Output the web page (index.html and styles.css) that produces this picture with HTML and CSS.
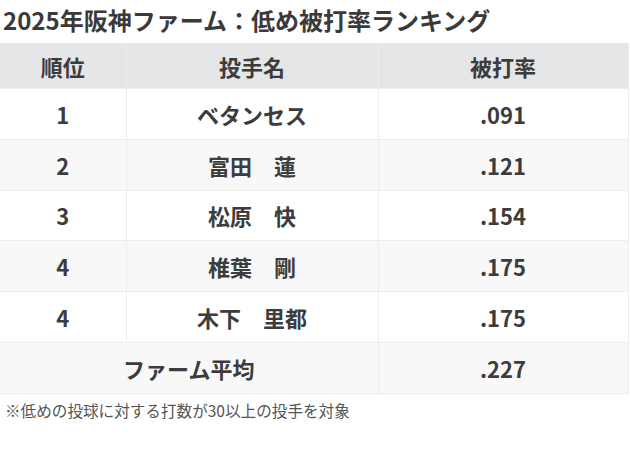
FILE: index.html
```html
<!DOCTYPE html>
<html lang="ja">
<head>
<meta charset="utf-8">
<link rel="stylesheet" href="styles.css">
</head>
<body>
<div class="wrap">
  <h1 class="title">2025年阪神ファーム：低め被打率ランキング</h1>
  <table class="rank">
    <colgroup><col class="c1"><col class="c2"><col class="c3"></colgroup>
    <thead>
      <tr><th>順位</th><th>投手名</th><th>被打率</th></tr>
    </thead>
    <tbody>
      <tr><td>1</td><td>ベタンセス</td><td>.091</td></tr>
      <tr><td>2</td><td>富田　蓮</td><td>.121</td></tr>
      <tr><td>3</td><td>松原　快</td><td>.154</td></tr>
      <tr><td>4</td><td>椎葉　剛</td><td>.175</td></tr>
      <tr><td>4</td><td>木下　里都</td><td>.175</td></tr>
      <tr><td colspan="2">ファーム平均</td><td>.227</td></tr>
    </tbody>
  </table>
  <p class="note">※低めの投球に対する打数が30以上の投手を対象</p>
</div>
</body>
</html>
```

FILE: styles.css
```css
html, body {
  margin: 0;
  padding: 0;
  background: #ffffff;
}
body {
  font-family: "Noto Sans CJK JP", "Noto Sans", sans-serif;
  color: #3a3a3a;
}
.wrap {
  width: 630px;
}
.title {
  margin: 0;
  padding: 3px 0 0 3px;
  height: 40px;
  box-sizing: border-box;
  font-size: 24px;
  line-height: 34px;
  font-weight: 600;
  color: #3a3a3a;
  white-space: nowrap;
}
.rank {
  width: 628px;
  margin-top: 3px;
  border-collapse: collapse;
  table-layout: fixed;
}
.c1 { width: 126px; }
.c2 { width: 252px; }
.c3 { width: 250px; }
.rank th, .rank td {
  border: 1px solid #ededed;
  text-align: center;
  vertical-align: middle;
  font-weight: 600;
  font-size: 22px;
  padding: 0;
  color: #3c3c3c;
}
.rank th {
  background: #e5e6e7;
  height: 45px;
  border-color: #eeeeee;
  border-top: none;
}
.rank td {
  height: 49.8px;
}
.rank tbody tr:nth-child(even) td {
  background: #f8f8f8;
}
.rank th:first-child, .rank td:first-child {
  border-left: none;
}
.note {
  margin: 5px 0 0 5px;
  font-size: 15.6px;
  line-height: 22px;
  color: #555555;
  white-space: nowrap;
}
```
